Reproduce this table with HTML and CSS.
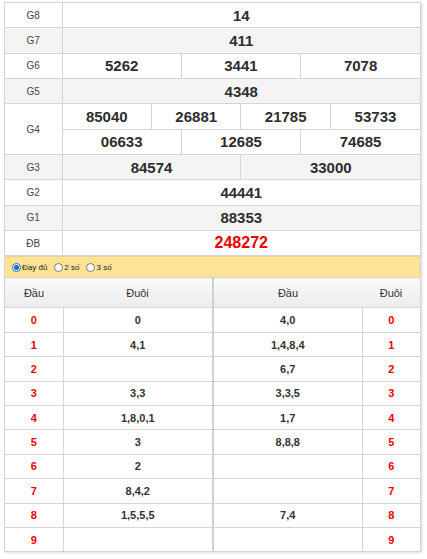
FILE: index.html
```html
<!DOCTYPE html>
<html>
<head>
<meta charset="utf-8">
<link rel="stylesheet" href="styles.css">
</head>
<body>
<div class="box">
  <table class="kq">
    <colgroup><col class="lab"><col span="12"></colgroup>
    <tr><td class="g">G8</td><td colspan="12" class="n">14</td></tr>
    <tr class="alt"><td class="g">G7</td><td colspan="12" class="n">411</td></tr>
    <tr><td class="g">G6</td><td colspan="4" class="n">5262</td><td colspan="4" class="n">3441</td><td colspan="4" class="n">7078</td></tr>
    <tr class="alt"><td class="g">G5</td><td colspan="12" class="n">4348</td></tr>
    <tr><td class="g" rowspan="2">G4</td><td colspan="3" class="n">85040</td><td colspan="3" class="n">26881</td><td colspan="3" class="n">21785</td><td colspan="3" class="n">53733</td></tr>
    <tr><td colspan="4" class="n">06633</td><td colspan="4" class="n">12685</td><td colspan="4" class="n">74685</td></tr>
    <tr class="alt"><td class="g">G3</td><td colspan="6" class="n">84574</td><td colspan="6" class="n">33000</td></tr>
    <tr><td class="g">G2</td><td colspan="12" class="n">44441</td></tr>
    <tr class="alt"><td class="g">G1</td><td colspan="12" class="n">88353</td></tr>
    <tr><td class="g">ĐB</td><td colspan="12" class="n db">248272</td></tr>
  </table>
  <div class="opts">
    <span class="opt"><span class="radio on"></span>Đầy đủ</span>
    <span class="opt"><span class="radio"></span>2 số</span>
    <span class="opt"><span class="radio"></span>3 số</span>
  </div>
  <table class="loto">
    <colgroup><col class="c1"><col class="c2"><col class="c3"><col class="c4"></colgroup>
    <tr class="hd"><th>Đầu</th><th class="mid">Đuôi</th><th>Đầu</th><th>Đuôi</th></tr>
    <tr><td class="r">0</td><td class="mid">0</td><td>4,0</td><td class="r">0</td></tr>
    <tr><td class="r">1</td><td class="mid">4,1</td><td>1,4,8,4</td><td class="r">1</td></tr>
    <tr><td class="r">2</td><td class="mid"></td><td>6,7</td><td class="r">2</td></tr>
    <tr><td class="r">3</td><td class="mid">3,3</td><td>3,3,5</td><td class="r">3</td></tr>
    <tr><td class="r">4</td><td class="mid">1,8,0,1</td><td>1,7</td><td class="r">4</td></tr>
    <tr><td class="r">5</td><td class="mid">3</td><td>8,8,8</td><td class="r">5</td></tr>
    <tr><td class="r">6</td><td class="mid">2</td><td></td><td class="r">6</td></tr>
    <tr><td class="r">7</td><td class="mid">8,4,2</td><td></td><td class="r">7</td></tr>
    <tr><td class="r">8</td><td class="mid">1,5,5,5</td><td>7,4</td><td class="r">8</td></tr>
    <tr><td class="r">9</td><td class="mid"></td><td></td><td class="r">9</td></tr>
  </table>
</div>
</body>
</html>
```
FILE: styles.css
```css
body {
  margin: 0;
  padding: 2px 4px;
  font-family: "Liberation Sans", Arial, sans-serif;
  color: #333;
  background: #fff;
}
.box {
  width: 415px;
  border: 1px solid #d4d4d4;
  box-shadow: 1px 1px 3px rgba(0,0,0,0.15);
}
table {
  border-collapse: collapse;
  width: 100%;
  table-layout: fixed;
}
.kq td {
  border: 1px solid #d6d6d6;
  height: 24.35px;
  padding: 0;
  text-align: center;
}
.kq tr:first-child td { border-top: 0; }
.kq td:first-child { border-left: 0; }
.kq td:last-child { border-right: 0; }
.kq col.lab { width: 57px; }
.kq tr.alt td { background: #f4f4f4; }
.g { font-size: 10px; color: #444; }
.n { font-size: 15px; font-weight: bold; color: #2e2e2e; }
.db { color: #e00; font-size: 16px; }
.opts {
  background: #ffe294;
  height: 20px;
  border-top: 1px solid #e6d39a;
  display: flex;
  align-items: center;
  padding-left: 7px;
  gap: 7px;
  font-size: 8px;
  color: #222;
}
.opt { display: flex; align-items: center; gap: 1px; }
.radio {
  width: 7px;
  height: 7px;
  border: 1px solid #777;
  border-radius: 50%;
  background: #fff;
  display: inline-block;
}
.radio.on {
  border-color: #1a6fd0;
  background: radial-gradient(circle, #1a6fd0 0 2.2px, #fff 2.8px);
}
.loto col.c1 { width: 58px; }
.loto col.c2 { width: 150px; }
.loto col.c3 { width: 149px; }
.loto col.c4 { width: 58px; }
.loto th {
  height: 29px;
  font-size: 11px;
  font-weight: normal;
  color: #333;
  background: linear-gradient(#fafafa, #ececec);
  border-top: 1px solid #d6d6d6;
  padding: 0;
}
.loto td {
  height: 23.4px;
  border: 1px solid #d6d6d6;
  padding: 0;
  text-align: center;
  font-size: 11px;
  font-weight: bold;
  color: #333;
}
.loto td:first-child { border-left: 0; }
.loto td:last-child { border-right: 0; }
.loto tr:last-child td { border-bottom: 0; }
.loto .mid { border-right: 2px solid #d0d0d0; }
.loto td.r { color: #e00; }
```
